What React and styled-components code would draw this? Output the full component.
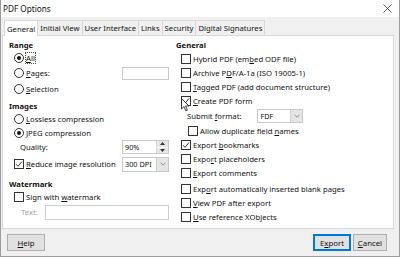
import React from 'react'
import styled, { createGlobalStyle } from 'styled-components'

const GlobalStyle = createGlobalStyle`
  html, body { margin:0; padding:0; }
  body {
    width:400px;
    height:257px;
    overflow:hidden;
    font-family:"Noto Sans", "Liberation Sans", sans-serif;
    color:#111;
  }
`

const Window = styled.div`
  width:400px;
  height:257px;
  box-sizing:border-box;
  border:1px solid #9c9c9c;
  border-top:none;
  background:#f0f0f0;
  display:flex;
  flex-direction:column;
  position:relative;
`
const TitleBar = styled.div`
  height:17px;
  background:#fff;
  display:flex;
  align-items:center;
  justify-content:space-between;
  padding:0 7px 0 2px;
  font-size:8.2px;
`
const Tabs = styled.div`
  display:flex;
  align-items:flex-end;
  height:16px;
  margin-top:2px;
  padding-left:3px;
`
const Tab = styled.div`
  font-size:7.7px;
  height:${(p) => (p.active ? 16 : 15)}px;
  box-sizing:border-box;
  display:flex;
  align-items:center;
  padding:0 2px;
  background:${(p) => (p.active ? '#fff' : '#f0f0f0')};
  border:1px solid #d9d9d9;
  border-bottom:none;
  border-left:${(p) => (p.active ? '1px solid #d9d9d9' : 'none')};
  margin-bottom:${(p) => (p.active ? -1 : 0)}px;
  position:relative;
  z-index:${(p) => (p.active ? 1 : 0)};
`
const Panel = styled.div`
  height:194px;
  margin:0 5px 0 1px;
  box-sizing:border-box;
  background:#fff;
  border:1px solid #d9d9d9;
  display:flex;
  padding:3px 0 0 6px;
  font-size:7.7px;
`
const LeftCol = styled.div`
  width:160px;
  display:flex;
  flex-direction:column;
`
const RightCol = styled.div`
  margin-left:7px;
  display:flex;
  flex-direction:column;
`
const SectionTitle = styled.div`
  font-weight:700;
  height:12px;
  display:flex;
  align-items:center;
  margin-top:${(p) => p.mt || 0}px;
`
const Row = styled.div`
  display:flex;
  align-items:center;
  height:${(p) => p.h || 14}px;
  padding-left:${(p) => (p.indent == null ? 5 : p.indent)}px;
  margin-top:${(p) => p.mt || 0}px;
  color:${(p) => (p.disabled ? '#a0a0a0' : 'inherit')};
`
const Label = styled.span`
  margin-left:${(p) => (p.ml == null ? 2 : p.ml)}px;
  white-space:nowrap;
  ${(p) => p.focus && 'outline:1px dotted #444; outline-offset:0;'}
`
const RadioCircle = styled.span`
  width:10px;
  height:10px;
  box-sizing:border-box;
  border:1px solid #333;
  border-radius:50%;
  display:flex;
  align-items:center;
  justify-content:center;
  flex-shrink:0;
  &::after {
    content:'';
    display:${(p) => (p.on ? 'block' : 'none')};
    width:4px;
    height:4px;
    border-radius:50%;
    background:#111;
  }
`
const Box = styled.span`
  width:10px;
  height:10px;
  box-sizing:border-box;
  border:1px solid #333;
  background:#fff;
  display:flex;
  align-items:center;
  justify-content:center;
  flex-shrink:0;
`
const Field = styled.div`
  margin-left:${(p) => (p.ml == null ? 'auto' : p.ml + 'px')};
  width:${(p) => p.w || 47}px;
  height:${(p) => p.h || 13}px;
  box-sizing:border-box;
  border:1px solid #c9c9c9;
  background:#fff;
  display:flex;
  align-items:center;
  color:#111;
`
const FieldText = styled.span`
  flex:1;
  padding-left:2px;
  font-size:7.3px;
  white-space:nowrap;
  overflow:hidden;
`
const Spin = styled.div`
  width:11px;
  height:100%;
  border-left:1px solid #d9d9d9;
  display:flex;
  flex-direction:column;
`
const SpinHalf = styled.div`
  flex:1;
  display:flex;
  align-items:center;
  justify-content:center;
  background:#e6e6e6;
  &:first-child { border-bottom:1px solid #fff; }
`
const DropBtn = styled.div`
  width:11px;
  height:100%;
  flex-shrink:0;
  background:#e5e5e5;
  border-left:1px solid #d0d0d0;
  display:flex;
  align-items:center;
  justify-content:center;
`
const TextInput = styled.div`
  flex:1;
  margin-left:7px;
  height:13px;
  border:1px solid #cfcfcf;
  background:#fff;
`
const Footer = styled.div`
  flex:1;
  display:flex;
  align-items:center;
  padding:0 12px 0 6px;
`
const Button = styled.div`
  width:${(p) => p.w}px;
  height:17px;
  box-sizing:border-box;
  background:#e1e1e1;
  border:${(p) => (p.primary ? '1px solid #0078d7' : '1px solid #adadad')};
  box-shadow:${(p) => (p.primary ? 'inset 0 0 0 1px #0078d7' : 'none')};
  display:flex;
  align-items:center;
  justify-content:center;
  font-size:7.8px;
  margin-left:${(p) => p.ml || 0}px;
`
const Spacer = styled.div`
  flex:1;
`
const Cursor = styled.svg`
  position:absolute;
  left:180px;
  top:98px;
`

const Check = () => (
  <svg width="8" height="8" viewBox="0 0 8 8">
    <path d="M1 4.2 L3 6.3 L7 1.5" fill="none" stroke="#222" strokeWidth="0.9" />
  </svg>
)

const CheckRow = ({ on, children, indent, mt }) => (
  <Row indent={indent} mt={mt}>
    <Box>{on && <Check />}</Box>
    <Label>{children}</Label>
  </Row>
)

const Chevron = () => (
  <svg width="6" height="4" viewBox="0 0 6 4">
    <path d="M0.5 0.8 L3 3.2 L5.5 0.8" fill="none" stroke="#777" strokeWidth="0.8" />
  </svg>
)

export default function App() {
  return (
    <>
      <GlobalStyle />
      <Window>
        <TitleBar>
          <span>PDF Options</span>
          <svg width="9" height="9" viewBox="0 0 9 9">
            <path d="M0.5 0.5 L8.5 8.5 M8.5 0.5 L0.5 8.5" stroke="#333" strokeWidth="0.8" />
          </svg>
        </TitleBar>
        <Tabs>
          <Tab active>General</Tab>
          <Tab>Initial View</Tab>
          <Tab>User Interface</Tab>
          <Tab>Links</Tab>
          <Tab>Security</Tab>
          <Tab>Digital Signatures</Tab>
        </Tabs>
        <Panel>
          <LeftCol>
            <SectionTitle>Range</SectionTitle>
            <Row h={14}>
              <RadioCircle on />
              <Label focus><u>A</u>ll</Label>
            </Row>
            <Row h={16}>
              <RadioCircle />
              <Label><u>P</u>ages:</Label>
              <Field h={13} />
            </Row>
            <Row h={15}>
              <RadioCircle />
              <Label><u>S</u>election</Label>
            </Row>
            <SectionTitle mt={4}>Images</SectionTitle>
            <Row h={14}>
              <RadioCircle />
              <Label><u>L</u>ossless compression</Label>
            </Row>
            <Row h={13}>
              <RadioCircle on />
              <Label><u>J</u>PEG compression</Label>
            </Row>
            <Row h={16} indent={11}>
              <Label ml={0}>Quality:</Label>
              <Field h={14}>
                <FieldText>90%</FieldText>
                <Spin>
                  <SpinHalf>
                    <svg width="5" height="3" viewBox="0 0 5 3"><path d="M0 3 L2.5 0 L5 3Z" fill="#333" /></svg>
                  </SpinHalf>
                  <SpinHalf>
                    <svg width="5" height="3" viewBox="0 0 5 3"><path d="M0 0 L2.5 3 L5 0Z" fill="#333" /></svg>
                  </SpinHalf>
                </Spin>
              </Field>
            </Row>
            <Row h={18}>
              <Box><Check /></Box>
              <Label><u>R</u>educe image resolution</Label>
              <Field h={15}>
                <FieldText>300 DPI</FieldText>
                <DropBtn><Chevron /></DropBtn>
              </Field>
            </Row>
            <SectionTitle mt={5}>Watermark</SectionTitle>
            <CheckRow>Sign with <u>w</u>atermark</CheckRow>
            <Row h={16} indent={12} disabled>
              <Label ml={0}>Text:</Label>
              <TextInput />
            </Row>
          </LeftCol>
          <RightCol>
            <SectionTitle>General</SectionTitle>
            <CheckRow mt={1}>Hybrid PDF (em<u>b</u>ed ODF file)</CheckRow>
            <CheckRow>Archive P<u>D</u>F/A-1a (ISO 19005-1)</CheckRow>
            <CheckRow><u>T</u>agged PDF (add document structure)</CheckRow>
            <CheckRow on><u>C</u>reate PDF form</CheckRow>
            <Row h={16} indent={11}>
              <Label ml={0}>Submit <u>f</u>ormat:</Label>
              <Field w={46} h={14} ml={16}>
                <FieldText>FDF</FieldText>
                <DropBtn><Chevron /></DropBtn>
              </Field>
            </Row>
            <CheckRow indent={12}>Allow duplicate field <u>n</u>ames</CheckRow>
            <CheckRow on>Export <u>b</u>ookmarks</CheckRow>
            <CheckRow>Expo<u>r</u>t placeholders</CheckRow>
            <CheckRow><u>E</u>xport comments</CheckRow>
            <CheckRow mt={2}>Exp<u>o</u>rt automatically inserted blank pages</CheckRow>
            <CheckRow><u>V</u>iew PDF after export</CheckRow>
            <CheckRow><u>U</u>se reference XObjects</CheckRow>
          </RightCol>
        </Panel>
        <Footer>
          <Button w={38}><u>H</u>elp</Button>
          <Spacer />
          <Button w={38} primary>E<u>x</u>port</Button>
          <Button w={34} ml={2}><u>C</u>ancel</Button>
        </Footer>
        <Cursor width="9" height="14" viewBox="0 0 9 14">
          <path d="M0.5 0.5 L0.5 11 L3 8.6 L4.8 12.8 L6.4 12.1 L4.6 8 L8 8 Z" fill="#fff" stroke="#111" strokeWidth="0.8" strokeLinejoin="round" />
        </Cursor>
      </Window>
    </>
  )
}
